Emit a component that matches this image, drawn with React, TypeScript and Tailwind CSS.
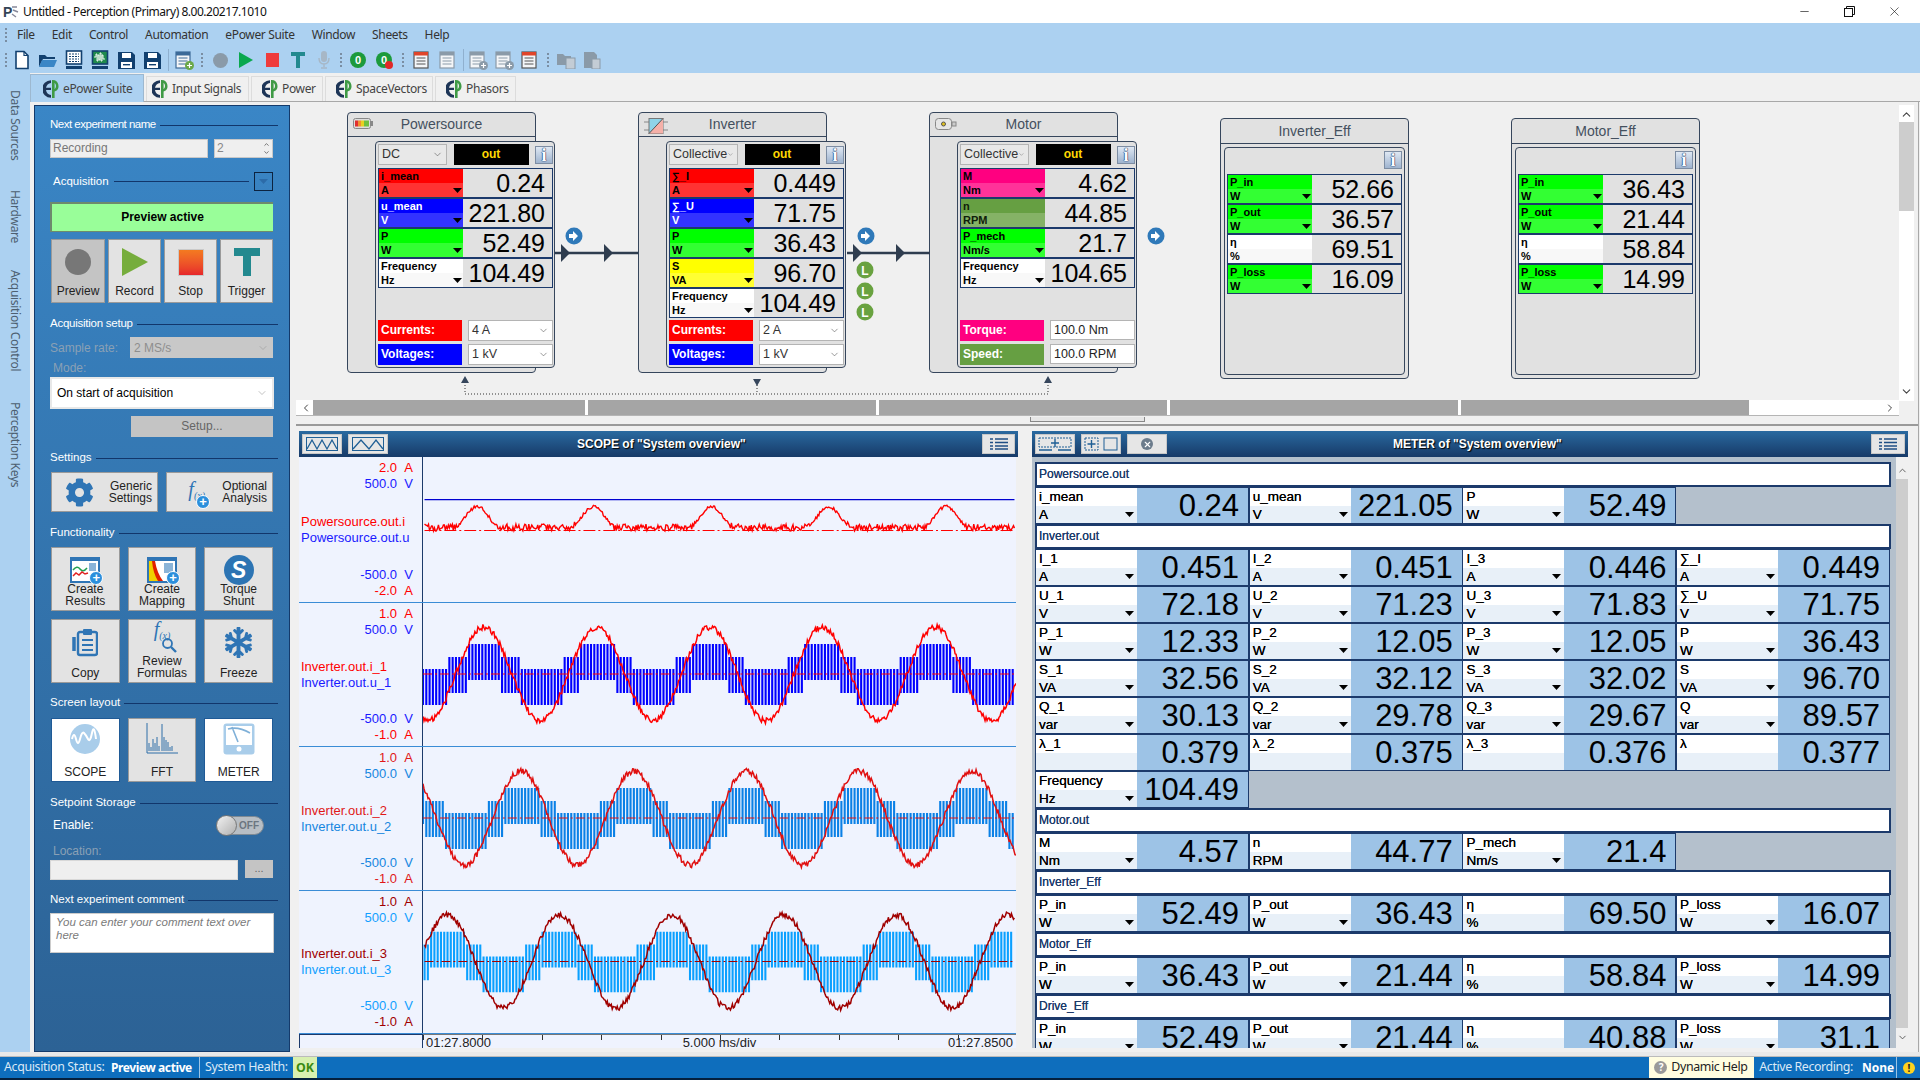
import React from "react";
import { ChevronDown, ChevronUp, ChevronLeft, ChevronRight, Minus, X } from "lucide-react";
import { FaCog, FaSnowflake } from "react-icons/fa";

/* ---------- waveform helpers ---------- */
function rng(seed: number) {
  let s = seed;
  return () => {
    s = (s * 16807) % 2147483647;
    return s / 2147483647 - 0.5;
  };
}
const W = 594;
function sinePath(center: number, amp: number, peak: number, period: number, seed: number) {
  const r = rng(seed);
  let d = "";
  for (let x = 0; x <= W; x += 1) {
    const y = center - amp * Math.cos((2 * Math.PI * (x - peak)) / period) + r() * 6;
    d += (x ? "L" : "M") + x + " " + y.toFixed(1);
  }
  return d;
}
function pwmPath(center: number, peak: number, period: number) {
  let d = "";
  for (let x = 0; x < W; x += 3.3) {
    let p = ((x - peak) / period) % 1;
    if (p < 0) p += 1;
    if (p > 0.5) p -= 1;
    const a = Math.abs(p);
    const [t, b] = a < 0.155 ? [30, -6] : a < 0.31 ? [17, -19] : [5, -31];
    d += `M${x.toFixed(1)} ${center - t}V${center - b}`;
  }
  return d;
}
function dcPath() {
  const r = rng(77);
  let d = "";
  for (let x = 0; x <= W; x += 1) {
    let bump = 0;
    for (const c of [53, 170, 289, 407, 525]) {
      const k = (x - c) / 24;
      if (Math.abs(k) < 1) bump = Math.max(bump, 21 * Math.cos((k * Math.PI) / 2) ** 2);
    }
    const y = 71 - bump + r() * (bump > 3 ? 3 : 7);
    d += (x ? "L" : "M") + x + " " + y.toFixed(1);
  }
  return d;
}

/* ---------- small icons ---------- */
const Tri = ({ c = "#000" }: { c?: string }) => (
  <svg width="9" height="5" viewBox="0 0 9 5" className="shrink-0"><path d="M0 0h9L4.5 5z" fill={c} /></svg>
);
const Logo = () => (
  <svg width="17" height="20" viewBox="0 0 17 20" className="shrink-0">
    <path d="M8 1.2A8.5 8.5 0 0 0 8 18.8V16A6 6 0 0 1 3 11h5V8.8H3A6 6 0 0 1 8 4z" fill="#1d3557" />
    <path d="M9 1v18h2.6v-6.4A6 6 0 0 0 9 1zM11.6 3.8a4.3 4.3 0 0 1 0 6.4z" fill="#3f9a45" />
  </svg>
);
const Grip = () => (
  <div className="flex flex-col gap-[2px] w-[3px] items-center">
    {[0, 1, 2, 3].map((i) => <span key={i} className="w-[2px] h-[2px] bg-[#7a8ea3]" />)}
  </div>
);
const Doc = ({ c = "#12406f", f = "#fff", children }: { c?: string; f?: string; children?: React.ReactNode }) => (
  <svg width="20" height="20" viewBox="0 0 20 20">
    <path d="M4 1.5h8l4 4v13H4z" fill={f} stroke={c} strokeWidth="1.6" />
    <path d="M12 1.5v4h4" fill="none" stroke={c} strokeWidth="1.2" />
    {children}
  </svg>
);
const Floppy = ({ c = "#12406f" }: { c?: string }) => (
  <svg width="19" height="19" viewBox="0 0 19 19">
    <path d="M1 1h14l3 3v14H1z" fill={c} />
    <rect x="5" y="2" width="9" height="5" fill="#fff" />
    <rect x="4" y="11" width="11" height="6" fill="#fff" />
    <rect x="6" y="13" width="7" height="1.4" fill={c} />
  </svg>
);
const Recorder = ({ g }: { g?: boolean }) => (
  <svg width="20" height="20" viewBox="0 0 20 20">
    <rect x="2.5" y="1" width="15" height="13" fill={g ? "#1f8a4c" : "#fff"} stroke="#12406f" strokeWidth="1.6" />
    {g ? <path d="M4 7h2V4h1v7h1V5h1v5h1V3h1v8h1V5h1v4h2" stroke="#fff" strokeWidth="0.9" fill="none" /> : <path d="M5 4h10M5 6.5h10M5 9h10M5 11.5h10" stroke="#12406f" strokeWidth="1.2" strokeDasharray="2 1" />}
    <rect x="2" y="16" width="16" height="3" fill="#12406f" />
  </svg>
);
const ListDoc = ({ c = "#8a9aa8", top = "#8a9aa8", badge }: { c?: string; top?: string; badge?: string }) => (
  <svg width="21" height="21" viewBox="0 0 21 21">
    <rect x="2" y="2" width="14" height="16" fill="#f4f6f8" stroke={c} strokeWidth="1.2" />
    <rect x="2" y="2" width="14" height="3.5" fill={top} />
    <path d="M4.5 8h9M4.5 11h9M4.5 14h9" stroke={c} strokeWidth="1.2" />
    {badge && <circle cx="15.5" cy="15.5" r="4.5" fill={badge} />}
    {badge && <path d="M13 15.5h5M15.5 13v5" stroke="#fff" strokeWidth="1.2" />}
  </svg>
);
const Sep = () => <div className="w-px h-[22px] bg-[#8fb0cf]" />;
const ToolGrip = ({ w }: { w: string }) => <div className={`${w} flex justify-center`}><Grip /></div>;
const Slot = ({ children }: { children: React.ReactNode }) => <div className="w-[26px] flex items-center justify-center">{children}</div>;

const InfoBtn = () => (
  <div className="w-[18px] h-[18px] border border-[#7d8da3] bg-gradient-to-b from-[#dfe8f3] to-[#9fb4cf] flex items-center justify-center shrink-0">
    <span className="text-[18px] leading-none font-['Liberation_Serif'] font-bold text-white [text-shadow:0_0_1px_#1c3a6b,0_0_1px_#1c3a6b,0_0_1px_#1c3a6b]">i</span>
  </div>
);

/* ---------- diagram ---------- */
type Ch = { n: string; u: string; v: string; c: string; noTri?: boolean };
const C: Record<string, [string, string, string]> = {
  red: ["bg-[#ff0000]", "bg-[#ff3333]", "text-black"],
  blue: ["bg-[#0000ff]", "bg-[#3333ff]", "text-white"],
  green: ["bg-[#00ff00]", "bg-[#33ff33]", "text-black"],
  white: ["bg-white", "bg-[#f8f8f8]", "text-black"],
  yellow: ["bg-[#ffff00]", "bg-[#ffff33]", "text-black"],
  pink: ["bg-[#ff0080]", "bg-[#ff3399]", "text-black"],
  olive: ["bg-[#669f42]", "bg-[#85b266]", "text-[#10200a]"],
};
const ChanTable = ({ rows }: { rows: Ch[] }) => (
  <div className="border border-[#1c3a6b] w-[175px] flex flex-col gap-[2px] bg-[#1c3a6b]">
    {rows.map((r) => {
      const c = C[r.c];
      return (
        <div key={r.n} className="flex h-[28px] bg-[#e1e1e1]">
          <div className={`w-[84px] shrink-0 text-[11px] leading-[14px] font-bold ${c[2]}`}>
            <div className={`${c[0]} h-[14px] px-[2px] whitespace-nowrap`}>{r.n}</div>
            <div className={`${c[1]} h-[14px] px-[2px] flex items-center justify-between pr-[1px]`}>
              <span>{r.u}</span>
              {!r.noTri && <Tri />}
            </div>
          </div>
          <div className="flex-1 text-right pr-[7px] text-[25px] leading-[29px] text-black">{r.v}</div>
        </div>
      );
    })}
  </div>
);
const Combo = ({ t, w, bg = "bg-white" }: { t: string; w: string; bg?: string }) => (
  <div className={`${w} ${bg} h-[21px] border border-[#b4b4b4] flex items-center justify-between px-[3px] text-[12.5px] text-[#333]`}>
    <span className="whitespace-nowrap">{t}</span>
    <ChevronDown size={11} strokeWidth={1.3} color="#555" />
  </div>
);
const BottomLine = ({ l, c, children }: { l: string; c: string; children: React.ReactNode }) => (
  <div className="flex h-[21px] justify-between w-[175px]">
    <div className={`w-[84px] ${c} text-white font-bold text-[12px] leading-[21px] px-[3px]`}>{l}</div>
    {children}
  </div>
);
const NodeIcon = ({ k }: { k: string }) => {
  if (k === "bat")
    return (
      <svg width="20" height="11" viewBox="0 0 20 11"><rect x="0.5" y="0.5" width="17" height="10" rx="2" fill="#ddd" stroke="#888" />
        <rect x="2" y="2.5" width="3" height="6" fill="#e03030" /><rect x="5" y="2.5" width="3" height="6" fill="#f09030" /><rect x="8" y="2.5" width="3" height="6" fill="#e8d020" /><rect x="11" y="2.5" width="5" height="6" fill="#70c040" /><rect x="18" y="3" width="2" height="5" fill="#888" /></svg>
    );
  if (k === "inv")
    return (
      <svg width="24" height="16" viewBox="0 0 24 16"><path d="M0 4h5M0 12h5M19 4h5M19 12h5" stroke="#888" /><rect x="5" y="0.5" width="14" height="15" fill="#8fd3e8" stroke="#777" /><path d="M5 15.5L19 .5V15.5z" fill="#f5b0a8" /><path d="M5 15.5L19 .5" stroke="#555" /></svg>
    );
  return (
    <svg width="22" height="12" viewBox="0 0 22 12"><rect x="0.5" y="0.5" width="16" height="11" rx="3" fill="#e6e6e6" stroke="#888" /><circle cx="8.5" cy="6" r="2" fill="#e0c020" stroke="#555" /><rect x="17" y="4" width="4" height="4" fill="#ccc" stroke="#888" /></svg>
  );
};
const Node = ({ title, icon, combo, rows, bottom }: { title: string; icon: string; combo: string; rows: Ch[]; bottom: React.ReactNode }) => (
  <div className="w-[189px] h-[261px] shrink-0 border border-[#36465c] rounded-[4px] bg-[#e1e1e1]">
    <div className="h-[24px] border-b border-[#36465c] relative flex items-center justify-center text-[14px] text-[#44505e]">
      <span className="absolute left-[5px] top-[5px]"><NodeIcon k={icon} /></span>
      {title}
    </div>
    <div className="relative z-10 ml-[27px] mt-[4px] w-[180px] h-[227px] border border-[#36465c] rounded-[4px] bg-[#e1e1e1] p-[2px] flex flex-col justify-between">
      <div>
        <div className="flex justify-between items-center h-[21px] w-[175px]">
          <Combo t={combo} w="w-[69px]" bg="bg-[#e8e8e8]" />
          <div className="w-[75px] h-[21px] bg-black text-[#ffd800] text-[12px] font-bold text-center leading-[21px]">out</div>
          <InfoBtn />
        </div>
        <div className="mt-[3px]"><ChanTable rows={rows} /></div>
      </div>
      <div className="flex flex-col gap-[3px]">{bottom}</div>
    </div>
  </div>
);
const EffNode = ({ title, rows }: { title: string; rows: Ch[] }) => (
  <div className="w-[189px] h-[261px] shrink-0 mt-[6px] border border-[#36465c] rounded-[4px] bg-[#e1e1e1]">
    <div className="h-[25px] border-b border-[#36465c] flex items-center justify-center text-[14px] text-[#44505e]">{title}</div>
    <div className="mx-[3px] mt-[3px] h-[228px] border border-[#36465c] rounded-[4px] px-[2px] pt-[3px]">
      <div className="flex justify-end w-[175px]"><InfoBtn /></div>
      <div className="mt-[5px]"><ChanTable rows={rows} /></div>
    </div>
  </div>
);
const Conn = () => (
  <svg className="absolute left-0 top-0 w-[1603px] h-[298px] pointer-events-none z-20" viewBox="0 0 1603 298">
    <path d="M259 151h83M551 151h83" stroke="#2f3d4f" strokeWidth="2.5" />
    <path d="M265 142l9 9-9 9zM308 142l9 9-9 9zM557 142l9 9-9 9zM600 142l9 9-9 9z" fill="#2f3d4f" />
    {[278, 570, 860].map((x) => (
      <g key={x}>
        <circle cx={x} cy="134" r="8.5" fill="#2f79b9" />
        <path d={`M${x - 5} 132h4v-3l5 5-5 5v-3h-4z`} fill="#fff" />
      </g>
    ))}
    {[168, 189, 210].map((y) => (
      <g key={y}>
        <circle cx="569" cy={y} r="8.5" fill="#69a240" />
        <text x="569" y={y + 4.5} textAnchor="middle" fontSize="12" fontWeight="700" fill="#fff" fontFamily="Liberation Sans">L</text>
      </g>
    ))}
    <path d="M169 277v15h583v-15M461 277v15" stroke="#333" strokeDasharray="1 2" fill="none" />
    <path d="M169 274l-4 7h8zM752 274l-4 7h8zM461 284l-4-7h8z" fill="#36465c" />
  </svg>
);

/* ---------- sidebar pieces ---------- */
const SecHead = ({ t, className = "" }: { t: string; className?: string }) => (
  <div className={`flex items-center gap-[4px] h-[16px] -mr-[4px] ${className}`}>
    <span className="text-white text-[11.5px] whitespace-nowrap">{t}</span>
    <div className="flex-1 h-px bg-[#12366b]" />
  </div>
);
const Big = ({ t, children, className = "bg-[#e3e3e3]", w }: { t: React.ReactNode; children: React.ReactNode; className?: string; w: string }) => (
  <div className={`${w} h-[64px] ${className} border border-[#9a9a9a] flex flex-col items-center relative text-[12px] leading-[12px] text-[#222] text-center`}>
    <div className="h-[38px] flex items-center justify-center mt-[3px]">{children}</div>
    <div className="absolute inset-x-0 bottom-[3px]">{t}</div>
  </div>
);
const Plus = () => (
  <span className="absolute right-[-5px] bottom-[-4px] w-[14px] h-[14px] rounded-full bg-[#2b8fdc] border border-white text-white text-[13px] leading-[11px] font-bold text-center">+</span>
);
const FX = ({ s = 20 }: { s?: number }) => (
  <span className="font-['Liberation_Serif'] italic text-[#2f75b5]" style={{ fontSize: s }}>f<sub className="text-[10px]">(x)</sub></span>
);
const Folder = ({ children }: { children: React.ReactNode }) => (
  <div className="relative w-[30px] h-[26px] border-2 border-[#2f75b5] border-t-[4px] bg-white flex">{children}</div>
);
const Lift = ({ t }: { t: string }) => <span className="relative -top-[2px]">{t}</span>;

const Sidebar = () => (
  <div className="w-[256px] shrink-0 h-[947px] mt-[3px] ml-[4px] border border-[#143a6b] bg-gradient-to-b from-[#3a86c6] to-[#2c6295] px-[15px] pt-[11px] text-[12px]">
    <SecHead t="Next experiment name" className="[&>span]:tracking-[-0.5px]" />
    <div className="flex justify-between mt-[6px] w-[223px]">
      <div className="w-[158px] h-[19px] bg-[#efefef] border border-[#c8c8c8] text-[#777] text-[12px] leading-[17px] px-[2px]">Recording</div>
      <div className="w-[59px] h-[19px] bg-[#efefef] border border-[#c8c8c8] text-[#888] text-[12px] leading-[17px] px-[2px] flex justify-between items-center">
        2
        <span className="flex flex-col gap-[1px]">
          <ChevronUp size={7} strokeWidth={3} color="#666" />
          <ChevronDown size={7} strokeWidth={3} color="#666" />
        </span>
      </div>
    </div>
    <div className="flex items-center mt-[14px] h-[19px] w-[223px] pl-[3px]">
      <span className="text-white text-[11.5px]">Acquisition</span>
      <div className="flex-1 h-px bg-[#12366b] mx-[5px]" />
      <div className="w-[19px] h-[19px] border border-[#0c2340] flex items-center justify-center"><Tri c="#2c6ba8" /></div>
    </div>
    <div className="mt-[11px] w-[223px] h-[30px] bg-[#99fe99] border-t-2 border-l-2 border-[#6d8a6d] border-b border-r-0 text-center font-bold text-[12px] leading-[27px] text-black">Preview active</div>
    <div className="mt-[7px] flex justify-between w-[222px] ml-[1px]">
      <Big w="w-[54px]" t={<Lift t="Preview" />} className="bg-[#c4c4c4]"><span className="w-[26px] h-[26px] rounded-full bg-[#777]" /></Big>
      <Big w="w-[53px]" t={<Lift t="Record" />}><svg width="26" height="28" viewBox="0 0 26 28"><path d="M0 0l26 14L0 28z" fill="#76ad3c" /></svg></Big>
      <Big w="w-[53px]" t={<Lift t="Stop" />}><span className="w-[26px] h-[27px] bg-gradient-to-b from-[#f47a20] to-[#e6262b] border border-[#c9c9c9]" /></Big>
      <Big w="w-[53px]" t={<Lift t="Trigger" />}><svg width="28" height="28" viewBox="0 0 28 28"><path d="M1 0h26v8H18v20h-8V8H1z" fill="#23898f" /></svg></Big>
    </div>
    <SecHead t="Acquisition setup" className="mt-[13px] [&>span]:tracking-[-0.25px]" />
    <div className="flex justify-between items-center mt-[5px] w-[223px] h-[21px]">
      <span className="text-[#8aa0b5] text-[12px]">Sample rate:</span>
      <div className="w-[143px] h-[21px] bg-[#c8c8c8] text-[#8e8e8e] text-[12px] flex items-center justify-between px-[4px]">2 MS/s<ChevronDown size={12} strokeWidth={1.2} color="#999" /></div>
    </div>
    <div className="text-[#8aa0b5] text-[12px] mt-[2px] h-[16px] leading-[16px] pl-[3px]">Mode:</div>
    <div className="mt-[1px] w-[224px] h-[32px] bg-white border-2 border-[#e8e8e8] text-[12px] text-black flex items-center justify-between pl-[5px] pr-[4px]">On start of acquisition<ChevronDown size={12} strokeWidth={1.2} color="#999" /></div>
    <div className="mt-[7px] ml-[81px] w-[142px] h-[21px] bg-[#c4c4c4] text-[#666] text-[12px] leading-[21px] text-center">Setup...</div>
    <SecHead t="Settings" className="mt-[13px]" />
    <div className="flex justify-between w-[222px] ml-[1px] mt-[6px]">
      <div className="w-[107px] h-[40px] bg-[#e3e3e3] border border-[#9a9a9a] flex items-center text-right text-[12px] leading-[12px] text-[#222] pl-[13px]">
        <FaCog size={29} color="#2f75b5" />
        <span className="flex-1 pr-[5px]">Generic<br />Settings</span>
      </div>
      <div className="w-[107px] h-[40px] bg-[#e3e3e3] border border-[#9a9a9a] flex items-center text-right text-[12px] leading-[12px] text-[#222] pl-[12px]">
        <span className="relative inline-block w-[26px] h-[26px] leading-[20px]"><FX /><Plus /></span>
        <span className="flex-1 pr-[5px]">Optional<br />Analysis</span>
      </div>
    </div>
    <SecHead t="Functionality" className="mt-[13px]" />
    <div className="grid grid-cols-3 gap-x-[8px] gap-y-[8px] w-[222px] ml-[1px] mt-[6px]">
      <Big w="w-full" t={<>Create<br />Results</>}>
        <Folder>
          <svg width="26" height="20" viewBox="0 0 26 20"><path d="M1 9q4-5 7-1t7-1" stroke="#22a050" fill="none" strokeWidth="1.5" /><path d="M1 15l3-3 3 2 3-3 3 2 3-1" stroke="#e02020" fill="none" strokeWidth="1.5" /><rect x="17" y="2" width="7" height="8" fill="#8ab4d8" /></svg>
          <Plus />
        </Folder>
      </Big>
      <Big w="w-full" t={<>Create<br />Mapping</>}>
        <Folder>
          <svg width="26" height="20" viewBox="0 0 26 20"><path d="M0 0h6q2 12 8 20H0z" fill="#e02000" /><path d="M0 0h3q1 12 6 20H0z" fill="#f0d000" /><rect x="15" y="2" width="9" height="10" fill="#8ab4d8" /></svg>
          <Plus />
        </Folder>
      </Big>
      <Big w="w-full" t={<>Torque<br />Shunt</>}>
        <div className="w-[30px] h-[30px] rounded-full bg-[#2c74b3] text-white font-bold italic text-[23px] leading-[30px] text-center">S</div>
      </Big>
      <Big w="w-full" t="Copy">
        <svg width="26" height="30" viewBox="0 0 26 30"><rect x="6" y="5" width="19" height="23" rx="2" fill="none" stroke="#2f75b5" strokeWidth="2.4" /><rect x="11" y="2" width="9" height="6" rx="1" fill="#2f75b5" /><path d="M10 13h11M10 18h11M10 23h11" stroke="#2f75b5" strokeWidth="2.2" /><path d="M2 10v14" stroke="#2f75b5" strokeWidth="3.5" /></svg>
      </Big>
      <Big w="w-full" t={<>Review<br />Formulas</>} className="bg-[#e3e3e3]">
        <div className="relative -mt-[8px] w-[30px] h-[30px]"><FX />
          <svg className="absolute right-0 bottom-0" width="16" height="16" viewBox="0 0 16 16"><circle cx="6.5" cy="6.5" r="4.5" fill="none" stroke="#2f75b5" strokeWidth="1.8" /><path d="M10 10l5 5" stroke="#2f75b5" strokeWidth="2.4" /></svg>
        </div>
      </Big>
      <Big w="w-full" t="Freeze"><FaSnowflake size={31} color="#2f75b5" /></Big>
    </div>
    <SecHead t="Screen layout" className="mt-[12px]" />
    <div className="grid grid-cols-3 gap-x-[8px] w-[222px] ml-[1px] mt-[7px]">
      <Big w="w-full" t="SCOPE" className="bg-white !border-[#1f5a96]">
        <svg width="32" height="32" viewBox="0 0 32 32" className="-mt-[4px]"><circle cx="16" cy="16" r="15" fill="#a9cdea" /><path d="M3 16q2-8 4 0t4 0 4-6 4 6 4-6 4 6" stroke="#fff" strokeWidth="2" fill="none" /></svg>
      </Big>
      <Big w="w-full" t="FFT">
        <svg width="32" height="32" viewBox="0 0 32 32" className="-mt-[4px]"><path d="M1 0v30h31M3 28v-8M5 28v-4M7 28v-12M9 28v-8M11 28v-14M13 28v-5M16 28V1M18 28V14M20 28v-11M22 28v-9M24 28v-4M26 28v-5" stroke="#2f6ea8" fill="none" strokeWidth="1" /></svg>
      </Big>
      <Big w="w-full" t="METER" className="bg-white !border-[#1f5a96]">
        <svg width="32" height="32" viewBox="0 0 32 32" className="-mt-[4px]"><rect x="0.5" y="0.5" width="31" height="31" rx="3" fill="#a9cdea" /><rect x="3" y="3" width="26" height="19" fill="#fff" /><path d="M5 6q10-3 22 4M9 4l6 15" stroke="#7fb0d8" strokeWidth="1.6" fill="none" /><circle cx="16" cy="26" r="2.5" fill="#fff" /></svg>
      </Big>
    </div>
    <SecHead t="Setpoint Storage" className="mt-[13px]" />
    <div className="flex items-center justify-between mt-[4px] h-[20px] w-[223px] pl-[3px] pr-[9px]">
      <span className="text-white text-[12px]">Enable:</span>
      <div className="w-[48px] h-[19px] rounded-full bg-[#b8bec4] border border-[#7f8a94] relative text-[#6c7680] font-bold text-[10px] leading-[17px] text-right pr-[4px]">
        OFF
        <span className="absolute -left-[1px] -top-[2px] w-[21px] h-[21px] rounded-full bg-gradient-to-br from-[#f2f2f2] to-[#b0b0b0] border border-[#777]" />
      </div>
    </div>
    <div className="text-[#8aa0b5] text-[12px] mt-[8px] h-[16px] leading-[16px] pl-[3px]">Location:</div>
    <div className="flex justify-between mt-[1px] w-[223px]">
      <div className="w-[188px] h-[20px] bg-[#efefef] border border-[#d8d8d8]" />
      <div className="w-[28px] h-[18px] bg-[#c4c4c4] text-[#666] text-[11px] leading-[16px] text-center">...</div>
    </div>
    <SecHead t="Next experiment comment" className="mt-[12px]" />
    <div className="mt-[5px] w-[224px] h-[40px] bg-white border border-[#ccc] italic text-[#7b7b7b] text-[11.5px] leading-[13px] px-[5px] py-[2px]">You can enter your comment text over here</div>
  </div>
);

/* ---------- scope ---------- */
const Axis = ({ v, u, c }: { v: string; u: string; c: string }) => (
  <div className={`flex justify-end pr-[9px] h-[16px] leading-[16px] ${c}`}>
    <span>{v}</span><span className="w-[16px] text-right">{u}</span>
  </div>
);
const Strip = ({ h, lbl, ci, cu, children, names }: { h: string; lbl: [string, string]; ci: string; cu: string; children: React.ReactNode; names: [string, string] }) => (
  <div className={`flex ${h} border-b border-[#3a8cd6] text-[13px] shrink-0`}>
    <div className="w-[123px] shrink-0 flex flex-col justify-between py-[3px] border-r border-[#1c3a6b] box-content">
      <div><Axis v={lbl[0]} u="A" c={ci} /><Axis v={lbl[1]} u="V" c={cu} /></div>
      <div className="pl-[2px] leading-[16px]"><div className={ci}>{names[0]}</div><div className={cu}>{names[1]}</div></div>
      <div><Axis v={"-" + lbl[1]} u="V" c={cu} /><Axis v={"-" + lbl[0]} u="A" c={ci} /></div>
    </div>
    {children}
  </div>
);
const Wave = ({ peak, c, u, center }: { peak: number; c: string; u: string; center: number }) => (
  <svg className="block w-[594px] h-full" viewBox="0 0 594 143">
    <path d={pwmPath(center, peak, 113)} stroke={u} strokeWidth="2.1" fill="none" />
    <path d={`M0 ${center}H594`} stroke={c} strokeWidth="1.2" strokeDasharray="9 3 2 3" />
    <path d={sinePath(center, 47, peak, 113, Math.round(peak) * 31 + 7)} stroke={c} strokeWidth="1.5" fill="none" />
  </svg>
);

const HeadBtn = ({ children, w = "w-[40px]" }: { children: React.ReactNode; w?: string }) => (
  <div className={`${w} h-[20px] bg-[#e6e6e6] border border-[#c8c8c8] flex items-center justify-center shrink-0`}>{children}</div>
);
const ListIcon = () => (
  <svg width="18" height="12" viewBox="0 0 18 12"><path d="M0 1h3M5 1h13M0 4.5h3M5 4.5h13M0 8h3M5 8h13M0 11h3M5 11h13" stroke="#1f4f85" strokeWidth="1.6" /></svg>
);
const PanelHead = ({ title, left, right, pos }: { title: string; left: React.ReactNode; right: React.ReactNode; pos: string }) => (
  <div className="h-[26px] relative flex items-center bg-gradient-to-b from-[#2a6aa0] to-[#173a68] px-[3px] gap-[6px]">
    {left}
    <div className={`absolute top-0 ${pos} h-[26px] leading-[26px] text-white font-bold text-[12px] [text-shadow:1px_1px_1px_#000]`}>{title}</div>
    <div className="ml-auto">{right}</div>
  </div>
);

const Scope = () => (
  <div className="w-[719px] shrink-0 ml-[3px]">
    <PanelHead
      title={'SCOPE of "System overview"'}
      pos="left-[278px]"
      left={<>
        <HeadBtn><svg width="32" height="14" viewBox="0 0 32 14"><rect x="0.5" y="0.5" width="31" height="13" fill="none" stroke="#1f5f95" /><path d="M1 12L6 3l5 9 5-9 5 9 5-9 5 9" stroke="#1f5f95" fill="none" strokeWidth="1.3" /></svg></HeadBtn>
        <HeadBtn><svg width="32" height="14" viewBox="0 0 32 14"><rect x="0.5" y="0.5" width="31" height="13" fill="none" stroke="#1f5f95" /><path d="M1 12L9 3l8 9 7-9 7 9" stroke="#1f5f95" fill="none" strokeWidth="1.3" /></svg></HeadBtn>
      </>}
      right={<HeadBtn w="w-[33px]"><ListIcon /></HeadBtn>}
    />
    <div className="bg-[#eff3fe] w-[717px] h-[591px] flex flex-col overflow-hidden">
      <Strip h="h-[146px]" lbl={["2.0", "500.0"]} ci="text-[#ff0000]" cu="text-[#1a1aff]" names={["Powersource.out.i", "Powersource.out.u"]}>
        <svg className="block w-[594px] h-full" viewBox="0 0 594 146">
          <path d="M0 43H594" stroke="#0000d0" strokeWidth="1.3" />
          <path d="M0 74H594" stroke="#ff0000" strokeWidth="1.2" strokeDasharray="12 3 2 3" />
          <path d={dcPath()} stroke="#ff0000" strokeWidth="1.4" fill="none" />
        </svg>
      </Strip>
      <Strip h="h-[144px]" lbl={["1.0", "500.0"]} ci="text-[#ff0000]" cu="text-[#1a1aff]" names={["Inverter.out.i_1", "Inverter.out.u_1"]}>
        <Wave peak={61} c="#ff0000" u="#0000ff" center={71} />
      </Strip>
      <Strip h="h-[144px]" lbl={["1.0", "500.0"]} ci="text-[#e01818]" cu="text-[#1686e0]" names={["Inverter.out.i_2", "Inverter.out.u_2"]}>
        <Wave peak={98} c="#e01010" u="#0a80e6" center={71} />
      </Strip>
      <Strip h="h-[143px]" lbl={["1.0", "500.0"]} ci="text-[#a00000]" cu="text-[#12a0ff]" names={["Inverter.out.i_3", "Inverter.out.u_3"]}>
        <Wave peak={23} c="#a00000" u="#0aa0ff" center={71} />
      </Strip>
      <div className="h-[15px] flex shrink-0">
        <div className="w-[124px] shrink-0 border border-[#1c3a6b]" />
        <div className="w-[594px] border-t border-[#777] relative text-[13px] leading-[15px] text-[#222] flex justify-between px-[3px]">
          {Array.from({ length: 11 }).map((_, i) => (
            <span key={i} className="absolute top-0 w-px h-[5px] bg-[#333]" style={{ left: i * 59.4 }} />
          ))}
          <span>01:27.8000</span><span>5.000 ms/div</span><span>01:27.8500</span>
        </div>
      </div>
    </div>
  </div>
);

/* ---------- meter ---------- */
type MC = [string, string, string, boolean?];
const Cell = ({ c }: { c: MC }) => (
  <div className="w-[214px] h-[37px] shrink-0 border border-[#1c3a6b] flex -mr-[0.3px]">
    <div className="w-[101px] shrink-0 text-[13.5px] leading-[17px] text-black [text-shadow:0_0_0.5px_#000]">
      <div className="h-[17.5px] bg-white px-[3px]">{c[0]}</div>
      <div className="h-[17.5px] bg-[#e8f0f8] px-[3px] flex items-center justify-between">
        <span>{c[1]}</span>{c[3] === false ? null : <Tri />}
      </div>
    </div>
    <div className="flex-1 bg-[#9dc3e6] text-right pr-[9px] text-[31px] leading-[35px] text-black">{c[2]}</div>
  </div>
);
const Row = ({ cells }: { cells: MC[] }) => <div className="flex">{cells.map((c) => <Cell key={c[0]} c={c} />)}</div>;
const Sec = ({ t }: { t: string }) => (
  <div className="h-[25px] w-[856px] shrink-0 border-2 border-[#1c3a6b] bg-white text-[12px] text-[#1c3a6b] [text-shadow:0_0_0.6px_#1c3a6b] leading-[21px] px-[2px]">{t}</div>
);
const Meter = () => (
  <div className="w-[876px] shrink-0">
    <PanelHead
      title={'METER of "System overview"'}
      pos="left-[361px]"
      left={<>
        <HeadBtn><svg width="34" height="14" viewBox="0 0 34 14"><rect x="1" y="1" width="32" height="9" fill="none" stroke="#1f5f95" strokeDasharray="2 1" /><path d="M1 13h13M20 13h13M17 2v8M13 6h8" stroke="#1f5f95" strokeWidth="1.4" /></svg></HeadBtn>
        <HeadBtn><svg width="34" height="14" viewBox="0 0 34 14"><rect x="1" y="1" width="13" height="12" fill="none" stroke="#1f5f95" strokeDasharray="2 1" /><path d="M7.5 3v8M3.5 7h8" stroke="#1f5f95" strokeWidth="1.4" /><rect x="20" y="1" width="13" height="12" fill="none" stroke="#1f5f95" /></svg></HeadBtn>
        <HeadBtn><span className="w-[12px] h-[12px] rounded-full bg-[#6c7c8c] flex items-center justify-center"><X size={9} color="#fff" strokeWidth={3} /></span></HeadBtn>
      </>}
      right={<HeadBtn w="w-[34px]"><ListIcon /></HeadBtn>}
    />
    <div className="flex h-[591px]">
      <div className="w-[864px] bg-[#b4c0cc] pl-[3px] pt-[5px] flex flex-col overflow-hidden">
        <Sec t="Powersource.out" />
        <Row cells={[["i_mean", "A", "0.24"], ["u_mean", "V", "221.05"], ["P", "W", "52.49"]]} />
        <Sec t="Inverter.out" />
        <Row cells={[["I_1", "A", "0.451"], ["I_2", "A", "0.451"], ["I_3", "A", "0.446"], ["∑_I", "A", "0.449"]]} />
        <Row cells={[["U_1", "V", "72.18"], ["U_2", "V", "71.23"], ["U_3", "V", "71.83"], ["∑_U", "V", "71.75"]]} />
        <Row cells={[["P_1", "W", "12.33"], ["P_2", "W", "12.05"], ["P_3", "W", "12.05"], ["P", "W", "36.43"]]} />
        <Row cells={[["S_1", "VA", "32.56"], ["S_2", "VA", "32.12"], ["S_3", "VA", "32.02"], ["S", "VA", "96.70"]]} />
        <Row cells={[["Q_1", "var", "30.13"], ["Q_2", "var", "29.78"], ["Q_3", "var", "29.67"], ["Q", "var", "89.57"]]} />
        <Row cells={[["λ_1", "", "0.379", false], ["λ_2", "", "0.375", false], ["λ_3", "", "0.376", false], ["λ", "", "0.377", false]]} />
        <Row cells={[["Frequency", "Hz", "104.49"]]} />
        <Sec t="Motor.out" />
        <Row cells={[["M", "Nm", "4.57"], ["n", "RPM", "44.77", false], ["P_mech", "Nm/s", "21.4"]]} />
        <Sec t="Inverter_Eff" />
        <Row cells={[["P_in", "W", "52.49"], ["P_out", "W", "36.43"], ["η", "%", "69.50", false], ["P_loss", "W", "16.07"]]} />
        <Sec t="Motor_Eff" />
        <Row cells={[["P_in", "W", "36.43"], ["P_out", "W", "21.44"], ["η", "%", "58.84", false], ["P_loss", "W", "14.99"]]} />
        <Sec t="Drive_Eff" />
        <Row cells={[["P_in", "W", "52.49"], ["P_out", "W", "21.44"], ["η", "%", "40.88", false], ["P_loss", "W", "31.1"]]} />
      </div>
      <div className="w-[12px] bg-[#f0f0f0] flex flex-col items-center">
        <ChevronUp size={11} strokeWidth={2} color="#555" className="mt-[8px]" />
        <div className="w-[12px] flex-1 bg-[#cdcdcd] mt-[3px] mb-[4px]" />
        <ChevronDown size={11} strokeWidth={2} color="#555" className="mb-[5px]" />
      </div>
    </div>
  </div>
);

/* ---------- page ---------- */
const MENU: [string, string][] = [["File", "ml-[10px]"], ["Edit", "ml-[17px]"], ["Control", "ml-[17px]"], ["Automation", "ml-[17px]"], ["ePower Suite", "ml-[17px]"], ["Window", "ml-[17px]"], ["Sheets", "ml-[17px]"], ["Help", "ml-[17px]"]];
const TABS: [string, string, string][] = [["Input Signals", "w-[103px]", "pl-[5px]"], ["Power", "w-[72px]", "pl-[10px]"], ["SpaceVectors", "w-[108px]", "pl-[10px]"], ["Phasors", "w-[81px]", "pl-[10px]"]];
const UI = "font-['Noto_Sans',sans-serif] text-[12px] tracking-[-0.35px]";

export default function App() {
  return (
    <div className="w-[1920px] h-[1080px] flex flex-col overflow-hidden bg-[#f0f0f0] font-['Liberation_Sans',sans-serif]">
      {/* title bar */}
      <div className="h-[23px] bg-white flex items-center shrink-0 pl-[2px]">
        <svg width="18" height="16" viewBox="0 0 18 16"><text x="1" y="13" fontSize="14" fontWeight="700" fill="#345" fontFamily="Liberation Sans">P</text><path d="M10 3h5M11 6l5 2M10 10l4 3" stroke="#889" strokeWidth="1.4" /></svg>
        <span className="ml-[3px] text-[#111] font-['Noto_Sans',sans-serif] text-[12px] tracking-[-0.48px]">Untitled - Perception (Primary) 8.00.20217.1010</span>
        <div className="ml-auto flex items-center mr-[3px]">
          <div className="w-[45px] flex justify-center"><Minus size={13} strokeWidth={1.2} color="#111" /></div>
          <div className="w-[45px] flex justify-center">
            <svg width="11" height="11" viewBox="0 0 11 11"><rect x="0.5" y="2.5" width="8" height="8" fill="none" stroke="#111" /><path d="M2.5 2.5v-2h8v8h-2" fill="none" stroke="#111" /></svg>
          </div>
          <div className="w-[45px] flex justify-center"><X size={15} strokeWidth={1} color="#111" /></div>
        </div>
      </div>
      {/* menu + toolbar */}
      <div className="h-[50px] bg-[#acd1f1] shrink-0 flex flex-col">
        <div className={`h-[24px] flex items-center pl-[4px] text-[#333] ${UI}`}>
          <Grip />
          {MENU.map(([m, c]) => <span key={m} className={c}>{m}</span>)}
        </div>
        <div className="h-[26px] flex items-center pl-[4px]">
          <div className="w-[5px]"><Grip /></div>
          <Slot><Doc /></Slot>
          <Slot><svg width="20" height="16" viewBox="0 0 20 16"><path d="M1 3h6l2 2h8v2H5L1 15z" fill="#12406f" /><path d="M4 8h15l-3 7H1z" fill="#3a86c6" /></svg></Slot>
          <Slot><Recorder /></Slot>
          <Slot><Recorder g /></Slot>
          <Slot><Floppy /></Slot>
          <Slot><Floppy /></Slot>
          <div className="w-[6px] flex justify-center"><Sep /></div>
          <Slot><ListDoc c="#3c6a98" top="#3c6a98" badge="#6aa848" /></Slot>
          <ToolGrip w="w-[10px]" />
          <Slot><span className="w-[15px] h-[15px] rounded-full bg-[#8a9aa8]" /></Slot>
          <Slot><svg width="14" height="16" viewBox="0 0 14 16"><path d="M0 0l14 8-14 8z" fill="#0aa84f" /></svg></Slot>
          <Slot><span className="w-[13px] h-[14px] bg-[#ef3b3b]" /></Slot>
          <Slot><svg width="14" height="16" viewBox="0 0 14 16"><path d="M0 0h14v4H9v12H5V4H0z" fill="#23898f" /></svg></Slot>
          <Slot><svg width="12" height="18" viewBox="0 0 12 18"><rect x="3" y="0" width="6" height="11" rx="3" fill="#a7b7c6" /><path d="M1 7q0 6 5 6t5-6M6 13v3M3 17h6" stroke="#a7b7c6" fill="none" strokeWidth="1.4" /></svg></Slot>
          <ToolGrip w="w-[8px]" />
          <Slot><span className="w-[16px] h-[16px] rounded-full bg-[#1c9a3c] text-white font-bold text-[11px] leading-[16px] text-center">0</span></Slot>
          <Slot><span className="relative w-[16px] h-[16px] rounded-full bg-[#1c9a3c] text-white font-bold text-[11px] leading-[16px] text-center">0<span className="absolute right-[-1px] bottom-[-1px] w-[8px] h-[8px] rounded-full bg-[#e02828]" /></span></Slot>
          <ToolGrip w="w-[12px]" />
          <Slot><ListDoc c="#555" top="#e0452a" /></Slot>
          <Slot><ListDoc /></Slot>
          <div className="w-[4px] flex justify-center"><Sep /></div>
          <Slot><ListDoc badge="#8a9aa8" /></Slot>
          <Slot><ListDoc badge="#8a9aa8" /></Slot>
          <Slot><ListDoc c="#555" top="#e0452a" /></Slot>
          <ToolGrip w="w-[10px]" />
          <Slot><svg width="20" height="17" viewBox="0 0 20 17"><path d="M1 2h6l2 2h6v9H1z" fill="#8a9aa8" /><rect x="10" y="6" width="9" height="11" fill="#c3ccd5" stroke="#8a9aa8" /></svg></Slot>
          <Slot><svg width="18" height="18" viewBox="0 0 18 18"><path d="M1 1h10l3 3v13H1z" fill="#8a9aa8" /><rect x="9" y="8" width="8" height="10" fill="#c3ccd5" stroke="#8a9aa8" /></svg></Slot>
        </div>
      </div>
      {/* body */}
      <div className="flex-1 flex min-h-0">
        <div className="w-[30px] bg-[#acd1f1] shrink-0 flex flex-col items-center text-[12px] text-[#4d5f70] font-['Noto_Sans',sans-serif] tracking-[-0.3px]">
          <span className="mt-[17px] h-[67px] whitespace-nowrap [writing-mode:vertical-rl]">Data Sources</span>
          <span className="mt-[33px] h-[50px] whitespace-nowrap [writing-mode:vertical-rl]">Hardware</span>
          <span className="mt-[30px] h-[102px] whitespace-nowrap [writing-mode:vertical-rl]">Acquisition Control</span>
          <span className="mt-[30px] h-[83px] whitespace-nowrap [writing-mode:vertical-rl]">Perception Keys</span>
        </div>
        <div className="flex-1 flex flex-col min-w-0">
          {/* tabs */}
          <div className={`h-[29px] flex items-end shrink-0 border-b border-[#a8a8a8] gap-[2px] text-[#444] whitespace-nowrap ${UI}`}>
            <div className="w-[114px] h-[28px] bg-[#acd1f1] border-t border-x border-[#9db8d0] flex items-center pl-[12px] gap-[3px] -mb-px"><Logo />ePower Suite</div>
            {TABS.map(([t, w, p]) => (
              <div key={t} className={`${w} ${p} h-[25px] border-t border-x border-[#dcdcdc] flex items-center gap-[3px]`}><Logo />{t}</div>
            ))}
          </div>
          {/* content */}
          <div className="flex-1 flex min-h-0 border-r border-[#a8a8a8] mr-[1px]">
            <Sidebar />
            <div className="flex-1 min-w-0 ml-[6px] flex flex-col">
              <div className="h-[315px] flex shrink-0">
                <div className="w-[1603px] flex flex-col">
                  <div className="h-[298px] relative flex items-start pl-[51px] pt-[10px] gap-[102px]">
                    <Node title="Powersource" icon="bat" combo="DC"
                      rows={[{ n: "i_mean", u: "A", v: "0.24", c: "red" }, { n: "u_mean", u: "V", v: "221.80", c: "blue" }, { n: "P", u: "W", v: "52.49", c: "green" }, { n: "Frequency", u: "Hz", v: "104.49", c: "white" }]}
                      bottom={<>
                        <BottomLine l="Currents:" c="bg-[#ff0000]"><Combo t="4 A" w="w-[85px]" /></BottomLine>
                        <BottomLine l="Voltages:" c="bg-[#0000ff]"><Combo t="1 kV" w="w-[85px]" /></BottomLine>
                      </>} />
                    <Node title="Inverter" icon="inv" combo="Collective"
                      rows={[{ n: "∑_I", u: "A", v: "0.449", c: "red" }, { n: "∑_U", u: "V", v: "71.75", c: "blue" }, { n: "P", u: "W", v: "36.43", c: "green" }, { n: "S", u: "VA", v: "96.70", c: "yellow" }, { n: "Frequency", u: "Hz", v: "104.49", c: "white" }]}
                      bottom={<>
                        <BottomLine l="Currents:" c="bg-[#ff0000]"><Combo t="2 A" w="w-[85px]" /></BottomLine>
                        <BottomLine l="Voltages:" c="bg-[#0000ff]"><Combo t="1 kV" w="w-[85px]" /></BottomLine>
                      </>} />
                    <Node title="Motor" icon="mot" combo="Collective"
                      rows={[{ n: "M", u: "Nm", v: "4.62", c: "pink" }, { n: "n", u: "RPM", v: "44.85", c: "olive", noTri: true }, { n: "P_mech", u: "Nm/s", v: "21.7", c: "green" }, { n: "Frequency", u: "Hz", v: "104.65", c: "white" }]}
                      bottom={<>
                        <BottomLine l="Torque:" c="bg-[#ff0080]"><div className="w-[85px] h-[20px] bg-white border border-[#b4b4b4] text-[12.5px] leading-[18px] px-[3px] text-[#222]">100.0 Nm</div></BottomLine>
                        <BottomLine l="Speed:" c="bg-[#669f42]"><div className="w-[85px] h-[20px] bg-white border border-[#b4b4b4] text-[12.5px] leading-[18px] px-[3px] text-[#222]">100.0 RPM</div></BottomLine>
                      </>} />
                    <EffNode title="Inverter_Eff" rows={[{ n: "P_in", u: "W", v: "52.66", c: "green" }, { n: "P_out", u: "W", v: "36.57", c: "green" }, { n: "η", u: "%", v: "69.51", c: "white", noTri: true }, { n: "P_loss", u: "W", v: "16.09", c: "green" }]} />
                    <EffNode title="Motor_Eff" rows={[{ n: "P_in", u: "W", v: "36.43", c: "green" }, { n: "P_out", u: "W", v: "21.44", c: "green" }, { n: "η", u: "%", v: "58.84", c: "white", noTri: true }, { n: "P_loss", u: "W", v: "14.99", c: "green" }]} />
                    <Conn />
                  </div>
                  <div className="h-[16px] flex items-center bg-white border-b border-[#b5b5b5]">
                    <ChevronLeft size={12} strokeWidth={2} color="#444" className="ml-[4px]" />
                    <div className="ml-[1px] flex h-[15px] gap-[3px]">
                      {[272, 288, 288, 288, 288].map((w, i) => <div key={i} className="bg-[#a5a5a5] h-full" style={{ width: w }} />)}
                    </div>
                    <ChevronRight size={12} strokeWidth={2} color="#444" className="ml-auto mr-[3px]" />
                  </div>
                </div>
                <div className="w-[15px] bg-white mt-[3px] mb-[16px] flex flex-col items-center">
                  <ChevronUp size={13} strokeWidth={2} color="#444" className="mt-[3px]" />
                  <div className="w-[15px] h-[89px] bg-[#cdcdcd] mt-[1px]" />
                  <ChevronDown size={13} strokeWidth={2} color="#444" className="mt-auto mb-[3px]" />
                </div>
              </div>
              <div className="h-[9px] border-b-2 border-[#9a9a9a] shrink-0 flex justify-center">
                <div className="w-[115px] h-[5px] border border-t-0 border-[#888] ml-[-40px] bg-[#e6e6e6]" />
              </div>
              <div className="h-[5px] shrink-0" />
              <div className="flex flex-1 min-h-0 gap-[14px]">
                <Scope />
                <Meter />
              </div>
            </div>
          </div>
        </div>
      </div>
      {/* status bar */}
      <div className="h-[5px] bg-[#e9e9e9] border-b border-[#bbb] shrink-0" />
      <div className="h-[21px] bg-[#0e6ebd] shrink-0 flex items-center text-[#dbe9f6] whitespace-nowrap font-['Noto_Sans',sans-serif] text-[12.4px]">
        <span className="ml-[4px] w-[98px] tracking-[-0.35px]">Acquisition Status:</span>
        <span className="ml-[9px] font-bold text-white w-[88px] text-[12px] tracking-[-0.4px]">Preview active</span>
        <span className="w-px h-[21px] bg-[#9cc4e6]" />
        <span className="ml-[5px] tracking-[-0.3px]">System Health:</span>
        <span className="ml-[5px] w-[24px] h-[21px] bg-[#d8f0b0] text-[#3a8a10] font-bold text-center leading-[21px]">OK</span>
        <div className="ml-auto w-[105px] h-[21px] bg-[#fffde0] text-[#222] flex items-center pl-[5px] gap-[4px] tracking-[-0.4px]">
          <span className="w-[13px] h-[13px] rounded-full bg-[#999] text-white text-[10px] font-bold text-center leading-[13px] shrink-0">?</span>
          Dynamic Help
        </div>
        <span className="ml-[5px] tracking-[-0.4px]">Active Recording:</span>
        <span className="ml-[9px] font-bold text-white w-[34px] text-[12px]">None</span>
        <span className="w-px h-[21px] bg-[#9cc4e6]" />
        <span className="ml-[6px] mr-[5px] w-[12px] h-[12px] rounded-full bg-[#ffd21f] text-[#222] text-[10px] font-bold text-center leading-[12px]">!</span>
      </div>
      <div className="h-[2px] bg-[#04203e] shrink-0" />
    </div>
  );
}
